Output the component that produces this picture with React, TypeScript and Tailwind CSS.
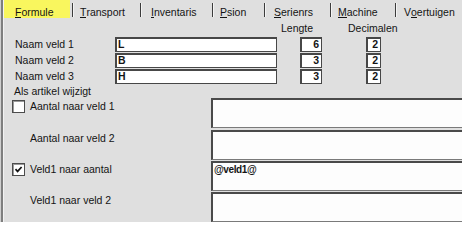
const font = "font-['Liberation_Sans',Arial,sans-serif]"

type Tab = { pre: string; key: string; post: string; w: string; pad: string }

const tabs: Tab[] = [
  { pre: "", key: "T", post: "ransport", w: "w-[68px]", pad: "ml-[6px]" },
  { pre: "", key: "I", post: "nventaris", w: "w-[72px]", pad: "ml-[9px]" },
  { pre: "", key: "P", post: "sion", w: "w-[52px]", pad: "ml-[6px]" },
  { pre: "", key: "S", post: "erienrs", w: "w-[66px]", pad: "ml-[8px]" },
  { pre: "", key: "M", post: "achine", w: "w-[65px]", pad: "ml-[6px]" },
  { pre: "V", key: "o", post: "ertuigen", w: "flex-1", pad: "ml-[7px]" },
]

const rows = [
  { label: "Naam veld 1", value: "L", len: "6", dec: "2" },
  { label: "Naam veld 2", value: "B", len: "3", dec: "2" },
  { label: "Naam veld 3", value: "H", len: "3", dec: "2" },
]

const memos = [
  { label: "Aantal naar veld 1", check: "off", value: "", h: "h-[32px]" },
  { label: "Aantal naar veld 2", check: "none", value: "", h: "h-[31px]" },
  { label: "Veld1 naar aantal", check: "on", value: "@veld1@", h: "h-[31px]" },
  { label: "Veld1 naar veld 2", check: "none", value: "", h: "h-[31px]" },
]

// access-key letter, underlined with a border so only that letter gets the line
function Key({ ch }: { ch: string }) {
  return <span className="inline-block leading-[10px] border-b border-[#141414]">{ch}</span>
}

function Checkbox({ checked }: { checked: boolean }) {
  return (
    <div className="w-[13px] h-[13px] shrink-0 border border-[#4c4c4c] bg-white shadow-[inset_1px_1px_0_#9a9a9a] flex items-center justify-center">
      {checked && (
        <svg width="9" height="9" viewBox="0 0 9 9">
          <path d="M1.5 4.2 L3.6 6.4 L7.6 2" fill="none" stroke="#111" strokeWidth="1.7" />
        </svg>
      )}
    </div>
  )
}

export default function App() {
  return (
    <div className={`${font} w-[462px] h-[222px] overflow-hidden flex bg-[#dfdfdf] text-[10.5px] text-[#141414]`}>
      {/* left frame edge */}
      <div className="w-[1px] bg-[#cfcfcf]" />
      <div className="w-[2px] bg-[#7e7e7e]" />
      <div className="w-[1px] bg-[#f2f2f2]" />

      <div className="flex-1 flex flex-col min-w-0">
        {/* tabs */}
        <div className="flex h-[18px] shrink-0">
          <div className="w-[66px] bg-[#f9f65e] pl-[11px] pt-[6px] leading-[12px]">
            <Key ch="F" />ormule
          </div>
          <div className="w-[2px]" />
          {tabs.map((t) => (
            <div key={t.post} className={`${t.w} flex items-start`}>
              <span className="mt-[3px] w-[1px] h-[14px] bg-[#3c3c3c]" />
              <span className="mt-[3px] w-[1px] h-[14px] bg-[#f4f4f4]" />
              <span className={`${t.pad} pt-[6px] leading-[12px] whitespace-nowrap`}>
                {t.pre}
                <Key ch={t.key} />
                {t.post}
              </span>
            </div>
          ))}
        </div>

        {/* column headers */}
        <div className="flex mt-[3px] h-[15px] leading-[15px] pl-[277px]">
          <span className="w-[67px]">Lengte</span>
          <span>Decimalen</span>
        </div>

        {/* name fields */}
        <div className="flex flex-col gap-[1px] mt-[1px]">
          {rows.map((r) => (
            <div key={r.label} className="flex h-[15px] leading-[15px]">
              <span className="w-[111px] pl-[11px]">{r.label}</span>
              <div className="w-[162px] bg-white border-t-2 border-l-2 border-r border-b border-[#474747] pl-[1px] font-bold leading-[11px]">
                {r.value}
              </div>
              <div className="ml-[23px] w-[22px] bg-white border-t-2 border-l-2 border-r border-b border-[#474747] pr-[2px] text-right font-bold leading-[11px]">
                {r.len}
              </div>
              <div className="ml-[44px] w-[15px] bg-white border-t-2 border-l-2 border-r border-b border-[#474747] pr-[2px] text-right font-bold leading-[11px]">
                {r.dec}
              </div>
            </div>
          ))}
        </div>

        <div className="mt-[1px] pl-[10px] leading-[13px]">Als artikel wijzigt</div>

        {/* memo fields */}
        <div className="flex flex-col">
          {memos.map((m) => (
            <div key={m.label} className={`flex ${m.h} shrink-0`}>
              <div className="w-[207px] flex items-start pt-[2px]">
                {m.check === "none" ? (
                  <span className="pl-[26px] leading-[13px]">{m.label}</span>
                ) : (
                  <div className="flex items-start pl-[8px] gap-[5px]">
                    <Checkbox checked={m.check === "on"} />
                    <span className="leading-[13px]">{m.label}</span>
                  </div>
                )}
              </div>
              <div className="flex-1 h-[30px] bg-[#fdfdfd] border-t-2 border-l-2 border-[#4a4a4a] border-b border-b-[#7a7a7a] pl-[1px] pt-[1px] font-bold text-[10px] tracking-[-0.4px] leading-[12px]">
                {m.value}
              </div>
            </div>
          ))}
        </div>
      </div>
    </div>
  )
}
